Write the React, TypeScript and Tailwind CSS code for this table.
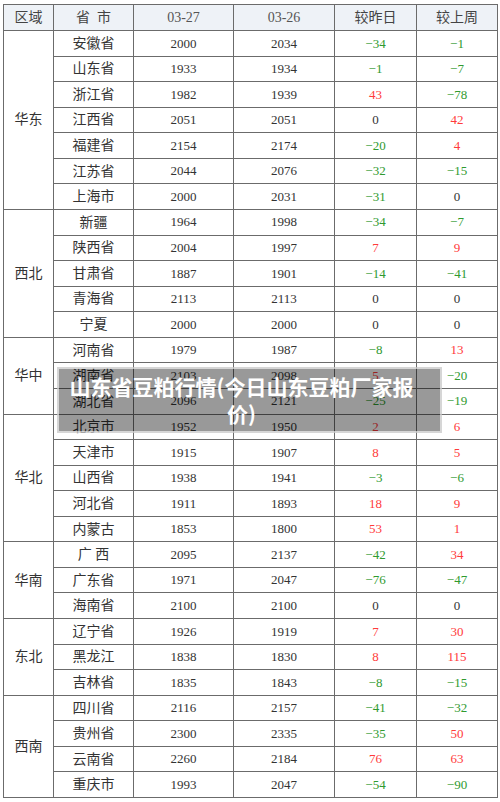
type Row = [string, number, number, number, number];

const regions: { name: string; span: string; rows: Row[] }[] = [
  {
    name: "华东",
    span: "row-span-7",
    rows: [
      ["安徽省", 2000, 2034, -34, -1],
      ["山东省", 1933, 1934, -1, -7],
      ["浙江省", 1982, 1939, 43, -78],
      ["江西省", 2051, 2051, 0, 42],
      ["福建省", 2154, 2174, -20, 4],
      ["江苏省", 2044, 2076, -32, -15],
      ["上海市", 2000, 2031, -31, 0],
    ],
  },
  {
    name: "西北",
    span: "row-span-5",
    rows: [
      ["新疆", 1964, 1998, -34, -7],
      ["陕西省", 2004, 1997, 7, 9],
      ["甘肃省", 1887, 1901, -14, -41],
      ["青海省", 2113, 2113, 0, 0],
      ["宁夏", 2000, 2000, 0, 0],
    ],
  },
  {
    name: "华中",
    span: "row-span-3",
    rows: [
      ["河南省", 1979, 1987, -8, 13],
      ["湖南省", 2103, 2098, 5, -20],
      ["湖北省", 2096, 2121, -25, -19],
    ],
  },
  {
    name: "华北",
    span: "row-span-5",
    rows: [
      ["北京市", 1952, 1950, 2, 6],
      ["天津市", 1915, 1907, 8, 5],
      ["山西省", 1938, 1941, -3, -6],
      ["河北省", 1911, 1893, 18, 9],
      ["内蒙古", 1853, 1800, 53, 1],
    ],
  },
  {
    name: "华南",
    span: "row-span-3",
    rows: [
      ["广 西", 2095, 2137, -42, 34],
      ["广东省", 1971, 2047, -76, -47],
      ["海南省", 2100, 2100, 0, 0],
    ],
  },
  {
    name: "东北",
    span: "row-span-3",
    rows: [
      ["辽宁省", 1926, 1919, 7, 30],
      ["黑龙江", 1838, 1830, 8, 115],
      ["吉林省", 1835, 1843, -8, -15],
    ],
  },
  {
    name: "西南",
    span: "row-span-4",
    rows: [
      ["四川省", 2116, 2157, -41, -32],
      ["贵州省", 2300, 2335, -35, 50],
      ["云南省", 2260, 2184, 76, 63],
      ["重庆市", 1993, 2047, -54, -90],
    ],
  },
];

const cell = "flex items-center justify-center border-r border-b border-[#6b6b6b]";

function Diff({ v }: { v: number }) {
  const color = v > 0 ? "text-[#ff3b3b]" : v < 0 ? "text-[#2f9a2f]" : "text-[#333]";
  return <div className={`${cell} ${color}`}>{v < 0 ? `−${-v}` : v}</div>;
}

export default function App() {
  return (
    <div
      className="relative w-[500px] h-[802px] bg-white pt-[4px] pl-[3px] text-[13px] text-[#333]"
      style={{ fontFamily: '"Liberation Serif", "Noto Sans CJK SC", serif' }}
    >
      <div className="grid h-[794px] border-l border-t border-[#6b6b6b] grid-cols-[50px_80px_100px_101px_82px_81px] grid-rows-[26px_repeat(30,minmax(0,1fr))] w-[495px]">
        <div className={`${cell} bg-[#eef2f7] text-[14px] text-[#444]`}>区域</div>
        <div className={`${cell} bg-[#eef2f7] text-[14px] text-[#444]`}>省&nbsp;&nbsp;市</div>
        <div className={`${cell} bg-[#eef2f7] text-[14px] text-[#555]`}>03-27</div>
        <div className={`${cell} bg-[#eef2f7] text-[14px] text-[#555]`}>03-26</div>
        <div className={`${cell} bg-[#eef2f7] text-[14px] text-[#444]`}>较昨日</div>
        <div className={`${cell} bg-[#eef2f7] text-[14px] text-[#444]`}>较上周</div>
        {regions.map((r) => (
          <div key={r.name} className="contents">
            <div className={`${cell} ${r.span} col-start-1 text-[14px]`}>{r.name}</div>
            {r.rows.map(([p, a, b, d, w]) => (
              <div key={p} className="contents">
                <div className={`${cell} text-[14px] whitespace-pre`}>{p}</div>
                <div className={cell}>{a}</div>
                <div className={cell}>{b}</div>
                <Diff v={d} />
                <Diff v={w} />
              </div>
            ))}
          </div>
        ))}
      </div>

      <div className="absolute left-[57px] top-[367px] w-[385px] h-[66px] bg-black/40 border-2 border-white/60 flex items-center justify-center pl-1 pr-5">
        <p
          className="text-white font-bold text-[21px] leading-[27px] text-center"
          style={{ fontFamily: '"Noto Sans CJK SC", "Noto Sans", sans-serif' }}
        >
          山东省豆粕行情(今日山东豆粕厂家报价)
        </p>
      </div>
    </div>
  );
}
